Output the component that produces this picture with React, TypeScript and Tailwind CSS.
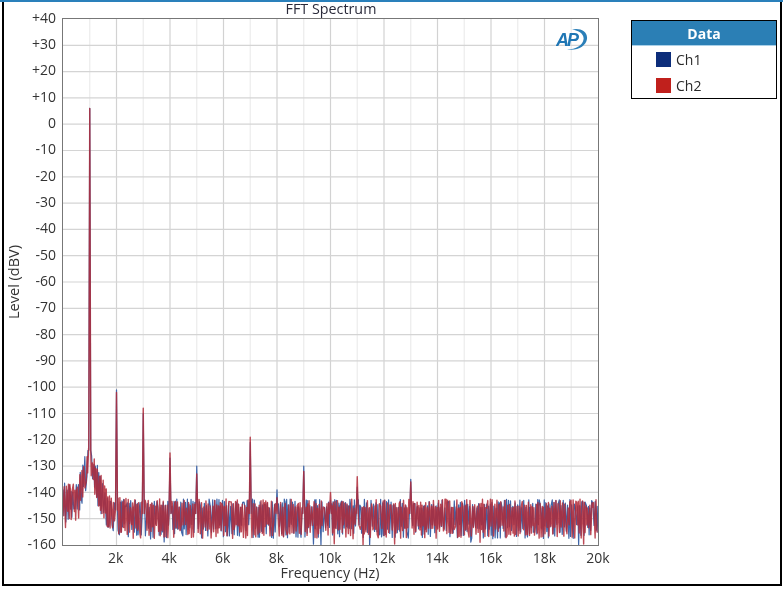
import React from "react";

const PLOT_W = 535;
const PLOT_H = 526;

const yTicks = ["+40", "+30", "+20", "+10", "0", "-10", "-20", "-30", "-40", "-50", "-60", "-70", "-80", "-90", "-100", "-110", "-120", "-130", "-140", "-150", "-160"];
const xTicks = ["", "2k", "4k", "6k", "8k", "10k", "12k", "14k", "16k", "18k", "20k"];

/* harmonics: kHz, dBV for each channel */
const peaks: [number, number, number][] = [
    [1, 6, 6],
    [2, -101, -102],
    [3, -110, -108],
    [4, -127, -125],
    [5, -130, -133],
    [7, -121, -119],
    [8, -139, -142],
    [9, -130, -132],
    [10, -143, -140],
    [11, -138, -134],
    [13, -135, -136],
];

function rng(seed: number) {
    let s = seed;
    return () => {
        s = (s + 0x6d2b79f5) | 0;
        let t = Math.imul(s ^ (s >>> 15), 1 | s);
        t = (t + Math.imul(t ^ (t >>> 7), 61 | t)) ^ t;
        return ((t ^ (t >>> 14)) >>> 0) / 4294967296;
    };
}

function xOf(khz: number) {
    return (khz / 20) * PLOT_W;
}

function yOf(db: number) {
    return ((40 - db) / 200) * PLOT_H;
}

function floorAt(khz: number) {
    if (khz < 0.5) return -143;
    if (khz < 0.95) return -143 + ((khz - 0.5) / 0.45) * 15.5;
    if (khz < 1.7) return -127.5 - ((khz - 0.95) / 0.75) * 19.5;
    if (khz < 2.6) return -147 - ((khz - 1.7) / 0.9) * 2;
    return -149;
}

function trace(seed: number, ch: 1 | 2) {
    const rand = rng(seed);
    const pts: { px: number; db: number }[] = [];
    let flip = 1;
    for (let px = 0; px <= PLOT_W; px += 0.55 + rand() * 0.85) {
        const khz = (px / PLOT_W) * 20;
        if (peaks.some((p) => Math.abs(xOf(p[0]) - px) < 1.1)) continue;
        if (rand() < 0.9) flip = -flip;
        const r = rand();
        // вниз шум уходит глубже, чем вверх
        let swing = flip > 0 ? 3 + r * 3.5 : 3 + r * 5.5;
        if (flip < 0 && rand() > 0.94) swing += 3.5;
        const narrow = Math.abs(khz - 1) < 0.15 ? 0.75 : 1;
        pts.push({ px, db: Math.max(floorAt(khz) + flip * swing * narrow, -160) });
    }
    for (const p of peaks) {
        const c = xOf(p[0]);
        const base = p[0] === 1 ? -124 : floorAt(p[0]) + 1;
        pts.push({ px: c - 1, db: base });
        pts.push({ px: c, db: p[ch] });
        pts.push({ px: c + 1, db: base });
    }
    return pts
        .sort((a, b) => a.px - b.px)
        .map((q) => `${q.px.toFixed(2)},${yOf(q.db).toFixed(2)}`)
        .join(" ");
}

const ch1Points = trace(12345, 1);
const ch2Points = trace(98765, 2);

function PlotSvg() {
    const minor = Array.from({ length: 10 }, (_, i) => i * 2 + 1);
    const majorX = Array.from({ length: 9 }, (_, i) => (i + 1) * 2);
    const majorY = Array.from({ length: 19 }, (_, i) => i + 1);
    return (
        <svg width={PLOT_W} height={PLOT_H} viewBox={`0 0 ${PLOT_W} ${PLOT_H}`} className="block">
            {minor.map((k) => (
                <line key={k} x1={xOf(k)} x2={xOf(k)} y1={0} y2={PLOT_H} stroke="#ececec" strokeWidth={1.2} />
            ))}
            {majorX.map((k) => (
                <line key={k} x1={xOf(k)} x2={xOf(k)} y1={0} y2={PLOT_H} stroke="#d2d2d2" strokeWidth={1.2} />
            ))}
            {majorY.map((k) => (
                <line key={k} x1={0} x2={PLOT_W} y1={k * 26.3} y2={k * 26.3} stroke="#d4d4d4" strokeWidth={1.2} />
            ))}
            <polyline points={ch1Points} fill="none" stroke="#3f65a8" strokeWidth={1.2} strokeLinejoin="round" />
            <polyline points={ch2Points} fill="none" stroke="#b22a38" strokeWidth={1.4} strokeOpacity={0.85} strokeLinejoin="round" />
        </svg>
    );
}

function ApLogo() {
    return (
        <svg width="32" height="24" viewBox="0 0 32 24" className="absolute right-[10px] top-[9px]">
            <path d="M16 1.5 C24 -0.5 32 3.5 31 11 C30 18 22 23 11 21.5 C20 21.5 27 17 27.6 11 C28 6 23 2.5 16 1.5 Z" fill="#2b7fb8" />
            <text x="0" y="17.5" fontFamily="Liberation Sans, sans-serif" fontSize="18" fontWeight="700" fontStyle="italic" fill="#1f76b4" letterSpacing="-2">
                AP
            </text>
        </svg>
    );
}

function Legend() {
    return (
        <div className="mt-[18px] ml-[30px] w-[146px] h-[79px] border-[1.5px] border-black bg-white text-[14px]">
            <div className="h-[25px] bg-[#2b7fb5] border-b-[1.5px] border-[#a9d0e8] flex items-center justify-center font-bold text-white">
                Data
            </div>
            <div className="flex items-center h-[26px] pl-[24px]">
                <span className="w-[15px] h-[15px] bg-[#0c2d7a] mr-[5px]" />
                <span className="text-[#2a2a2a]">Ch1</span>
            </div>
            <div className="flex items-center h-[26px] pl-[24px]">
                <span className="w-[15px] h-[15px] bg-[#c0201c] mr-[5px]" />
                <span className="text-[#2a2a2a]">Ch2</span>
            </div>
        </div>
    );
}

export default function App(): React.ReactElement {
    return (
        <div className="w-[783px] h-[590px] bg-white font-['Open_Sans',sans-serif] text-[#333] overflow-hidden">
            <div className="h-[2px] bg-[#2a80bb]" />
            <div className="ml-[2px] w-[780px] h-[584px] border-x-2 border-b-2 border-black flex blur-[0.35px]">
                <div className="w-[597px] shrink-0">
                    {/* заголовок */}
                    <div className="h-[13px] mb-[3px] pl-[59px] w-[595px] flex items-center justify-center text-[14.3px]">
                        <span className="text-[#2a2a3a]">FFT Spectrum</span>
                    </div>

                    <div className="flex">
                        <div className="w-[19px] flex items-center justify-end">
                            <span className="[writing-mode:vertical-rl] rotate-180 text-[14.5px] whitespace-nowrap -mr-[2px]">
                                Level (dBV)
                            </span>
                        </div>
                        <div className="w-[33px] h-[527px] -mt-[1px] flex flex-col justify-between text-[14px]">
                            {yTicks.map((t) => (
                                <div key={t} className="h-0 flex items-center justify-end">
                                    {t}
                                </div>
                            ))}
                        </div>
                        <div className="ml-[6px] relative border border-[#777] bg-white box-content">
                            <PlotSvg />
                            <ApLogo />
                        </div>
                    </div>

                    {/* ось X */}
                    <div className="ml-[58px] w-[536px] h-[15px] leading-[15px] mt-[4px] flex justify-between text-[14px]">
                        {xTicks.map((t, i) => (
                            <div key={i} className="w-0 flex justify-center whitespace-nowrap">
                                {t}
                            </div>
                        ))}
                    </div>
                    <div className="ml-[58px] w-[536px] h-[15px] leading-[15px] flex justify-center text-[14.3px]">
                        Frequency (Hz)
                    </div>
                </div>
                <Legend />
            </div>
        </div>
    );
}
